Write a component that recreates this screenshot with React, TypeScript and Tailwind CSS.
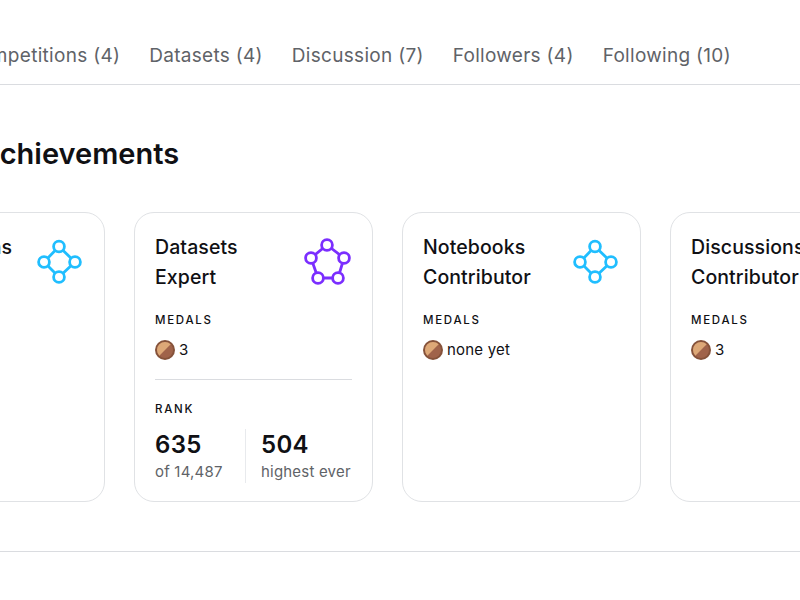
const tabs = ["Competitions (4)", "Datasets (4)", "Discussion (7)", "Followers (4)", "Following (10)"];

function NodeRing({ points, color }: { points: number[][]; color: string }) {
  return (
    <svg width="48" height="48" viewBox="0 0 48 48" fill="none" className="shrink-0 mt-[5px]">
      <polygon points={points.map((p) => p.join(",")).join(" ")} stroke={color} strokeWidth="2.8" />
      {points.map((p) => (
        <circle key={p.join("-")} cx={p[0]} cy={p[1]} r="5.4" fill="#fff" stroke={color} strokeWidth="2.8" />
      ))}
    </svg>
  );
}

const diamond = [[23, 8.5], [39, 24], [23, 39], [8, 24]];
const pentagon = [[23, 7], [40, 20], [34, 40], [14, 40], [7, 20]];

function Medal() {
  return (
    <svg width="20" height="20" viewBox="0 0 20 20" className="shrink-0">
      <circle cx="10" cy="10" r="10" fill="#85523A" />
      <circle cx="10" cy="10" r="8" fill="#A0634A" />
      <path d="M4.34 15.66A8 8 0 0 1 15.66 4.34Z" fill="#DDA877" />
    </svg>
  );
}

function Label({ children }: { children: string }) {
  return <div className="text-[11.5px] leading-4 font-medium tracking-[1.7px] text-[#101014]">{children}</div>;
}

function Card({ title, second, medals, tier, rank }: { title: string; second: string; medals: string; tier: "diamond" | "pentagon"; rank?: boolean }) {
  return (
    <div className="w-[238.5px] h-[290px] shrink-0 rounded-[20px] border border-[#e0e2e5] bg-white px-5 pt-5">
      <div className="flex justify-between">
        <div className="text-[19.5px] leading-[29.5px] font-medium tracking-[0.1px] text-[#101014] whitespace-nowrap">
          <div>{title}</div>
          <div>{second}</div>
        </div>
        {tier === "diamond" ? <NodeRing points={diamond} color="#20BEFF" /> : <NodeRing points={pentagon} color="#7B2EFF" />}
      </div>
      <div className="mt-5">
        <Label>MEDALS</Label>
      </div>
      <div className="mt-3 flex items-center gap-1 h-5 text-[15px] tracking-[0.2px] text-[#101014]">
        <Medal />
        <span>{medals}</span>
      </div>
      {rank && (
        <>
          <div className="mt-[19px] border-t border-[#dadce0]" />
          <div className="mt-[21px]">
            <Label>RANK</Label>
          </div>
          <div className="mt-[12px] flex">
            <div className="w-[91px] border-r border-[#e8eaed] h-[54px] pt-px">
              <div className="text-[24px] leading-[30px] font-semibold tracking-[0.3px] text-[#101014]">635</div>
              <div className="text-[15px] leading-6 tracking-[0.2px] text-[#5f6368]">of 14,487</div>
            </div>
            <div className="pl-[15px] pt-px">
              <div className="text-[24px] leading-[30px] font-semibold tracking-[0.3px] text-[#101014]">504</div>
              <div className="text-[15px] leading-6 tracking-[0.2px] text-[#5f6368] whitespace-nowrap">highest ever</div>
            </div>
          </div>
        </>
      )}
    </div>
  );
}

export default function App() {
  return (
    <div className="w-[800px] h-[600px] overflow-hidden bg-white font-['Inter',sans-serif]">
      <div className="h-[85px] border-b border-[#dadce0] pt-[42px]">
        <div className="flex gap-[29px] -ml-[35px] text-[19px] leading-7 tracking-[0.3px] text-[#5f6368] whitespace-nowrap">
          {tabs.map((t) => (
            <span key={t}>{t}</span>
          ))}
        </div>
      </div>
      <h2 className="mt-[51px] -ml-[21px] text-[29px] leading-9 font-semibold text-[#101014] whitespace-nowrap">Achievements</h2>
      <div className="mt-[40px] -ml-[134px] flex gap-[29.5px]">
        <Card title="Competitions" second="Contributor" medals="3" tier="diamond" />
        <Card title="Datasets" second="Expert" medals="3" tier="pentagon" rank />
        <Card title="Notebooks" second="Contributor" medals="none yet" tier="diamond" />
        <Card title="Discussions" second="Contributor" medals="3" tier="diamond" />
      </div>
      <div className="mt-[49px] border-t border-[#dadce0]" />
    </div>
  );
}
